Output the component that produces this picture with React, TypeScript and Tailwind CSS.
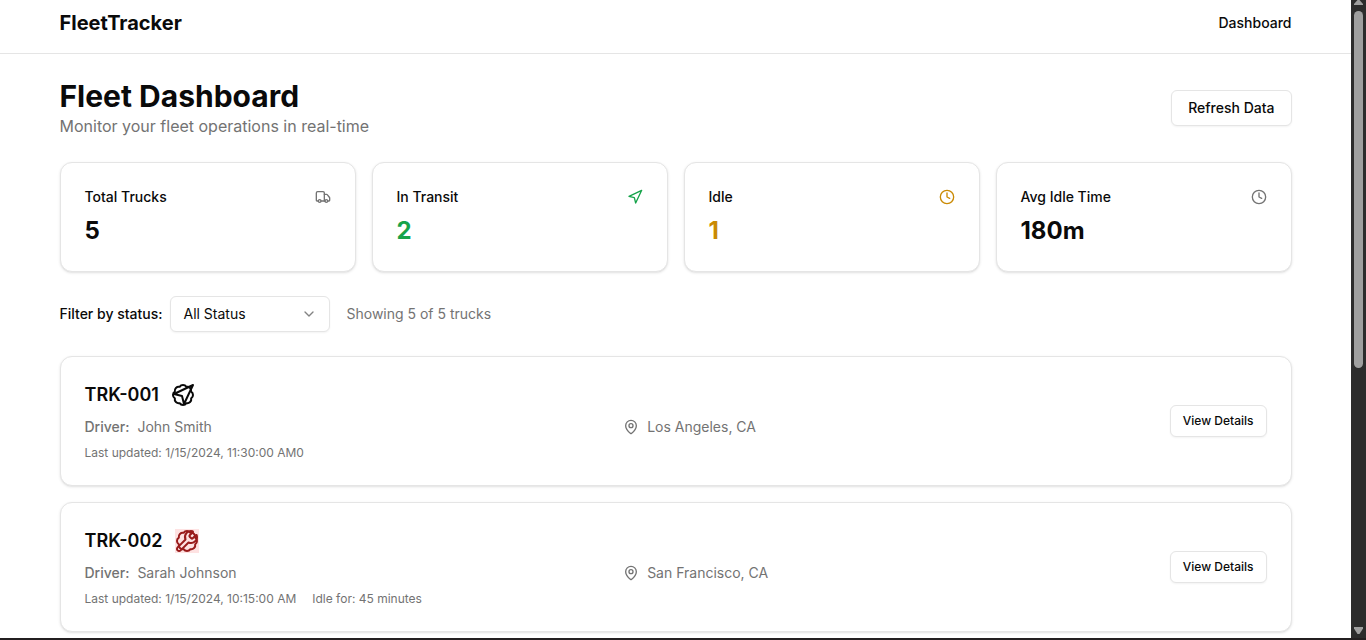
import type { ReactNode } from "react";
import { Badge, ChevronDown, Clock, MapPin, Navigation, Truck, Wrench } from "lucide-react";

type Stat = { label: string; value: string; tone: string; icon: ReactNode };

type TruckRecord = {
  id: string;
  driver: string;
  location: string;
  updated: string;
  idle?: string;
  status: ReactNode;
};

const stats: Stat[] = [
  {
    label: "Total Trucks",
    value: "5",
    tone: "text-[#0a0a0a]",
    icon: <Truck className="size-4 text-[#737373]" />,
  },
  {
    label: "In Transit",
    value: "2",
    tone: "text-[#16a34a]",
    icon: <Navigation className="size-4 text-[#16a34a]" />,
  },
  {
    label: "Idle",
    value: "1",
    tone: "text-[#ca8a04]",
    icon: <Clock className="size-4 text-[#ca8a04]" />,
  },
  {
    label: "Avg Idle Time",
    value: "180m",
    tone: "text-[#0a0a0a]",
    icon: <Clock className="size-4 text-[#737373]" />,
  },
];

const trucks: TruckRecord[] = [
  {
    id: "TRK-001",
    driver: "John Smith",
    location: "Los Angeles, CA",
    updated: "1/15/2024, 11:30:00 AM0",
    status: (
      <Badge className="size-6">
        <Navigation />
      </Badge>
    ),
  },
  {
    id: "TRK-002",
    driver: "Sarah Johnson",
    location: "San Francisco, CA",
    updated: "1/15/2024, 10:15:00 AM",
    idle: "Idle for: 45 minutes",
    status: (
      <Badge className="size-6 bg-[#fee2e2] text-[#991b1b]">
        <Wrench />
      </Badge>
    ),
  },
];

function StatCard({ label, value, tone, icon }: Stat) {
  return (
    <section className="flex flex-col gap-2 rounded-xl border border-[#e5e5e5] bg-white p-6 shadow-sm">
      <div className="flex items-center justify-between">
        <h2 className="text-sm font-medium">{label}</h2>
        {icon}
      </div>
      <p className={`text-2xl font-bold ${tone}`}>{value}</p>
    </section>
  );
}

function TruckCard({ id, driver, location, updated, idle, status }: TruckRecord) {
  return (
    <article className="flex items-center gap-4 rounded-xl border border-[#e5e5e5] bg-white p-6 shadow-sm">
      <div className="flex flex-1 flex-col gap-2">
        <div className="flex items-center gap-3">
          <h3 className="text-lg font-semibold">{id}</h3>
          {status}
        </div>
        <div className="grid grid-cols-2 gap-2 text-sm text-[#737373]">
          <div className="flex items-center gap-2">
            <span className="font-medium">Driver:</span>
            <span>{driver}</span>
          </div>
          <div className="flex items-center gap-2">
            <MapPin className="size-4" />
            <span>{location}</span>
          </div>
        </div>
        <div className="flex items-center gap-4 text-xs text-[#737373]">
          <span>Last updated: {updated}</span>
          {idle && <span>{idle}</span>}
        </div>
      </div>
      <button
        type="button"
        className="h-8 rounded-md border border-[#e5e5e5] bg-white px-3 text-xs font-medium shadow-xs"
      >
        View Details
      </button>
    </article>
  );
}

function ScrollRail() {
  return (
    <div aria-hidden="true" className="flex w-[15px] shrink-0 flex-col items-center bg-[#2c2c2c]">
      <svg width="9" height="5" viewBox="0 0 9 5" className="shrink-0" fill="#9f9f9f">
        <path d="M3.5 0h2L9 4v1H0V4z" />
      </svg>
      <div className="flex w-[9px] flex-1 flex-col pt-1.5 pb-1">
        <div className="h-7/12 rounded-full bg-[#9f9f9f]" />
      </div>
      <svg width="9" height="7" viewBox="0 0 9 7" className="mb-1 shrink-0" fill="#9f9f9f">
        <path d="M0 0h9v1.500L5.500 7h-2L0 1.500z" />
      </svg>
    </div>
  );
}

export default function App() {
  return (
    <div className="flex h-screen overflow-hidden border-b-2 border-[#231f20] bg-white font-['Inter',sans-serif] text-[#0a0a0a]">
      <div className="min-w-0 flex-1 overflow-hidden">
        <header className="border-b border-[#e5e5e5]">
          <div className="mx-auto flex max-w-7xl items-center justify-between px-6 pt-[9px] pb-4">
            <a href="#" className="text-xl font-bold">
              FleetTracker
            </a>
            <nav>
              <a href="#" className="block text-sm font-medium">
                Dashboard
              </a>
            </nav>
          </div>
        </header>

        <main className="mx-auto flex max-w-7xl flex-col gap-6 p-6">
          <div className="flex items-center justify-between">
            <div>
              <h1 className="text-3xl font-bold">Fleet Dashboard</h1>
              <p className="text-[#737373]">Monitor your fleet operations in real-time</p>
            </div>
            <button
              type="button"
              className="h-9 rounded-md border border-[#e5e5e5] bg-white px-4 text-sm font-medium shadow-xs"
            >
              Refresh Data
            </button>
          </div>

          <div className="grid grid-cols-2 gap-4 md:grid-cols-4">
            {stats.map((stat) => (
              <StatCard key={stat.label} {...stat} />
            ))}
          </div>

          <div className="flex items-center gap-4">
            <div className="flex items-center gap-2">
              <label htmlFor="status" className="text-sm font-medium">
                Filter by status:
              </label>
              <div className="grid w-40 items-center">
                <select
                  id="status"
                  className="col-start-1 row-start-1 h-9 w-full appearance-none rounded-md border border-[#e5e5e5] bg-white px-3 text-sm shadow-xs"
                >
                  <option>All Status</option>
                </select>
                <ChevronDown className="pointer-events-none col-start-1 row-start-1 mr-[13px] size-4 justify-self-end opacity-50" />
              </div>
            </div>
            <p className="text-sm text-[#737373]">Showing 5 of 5 trucks</p>
          </div>

          <div className="flex flex-col gap-4">
            {trucks.map((truck) => (
              <TruckCard key={truck.id} {...truck} />
            ))}
          </div>
        </main>
      </div>
      <ScrollRail />
    </div>
  );
}
